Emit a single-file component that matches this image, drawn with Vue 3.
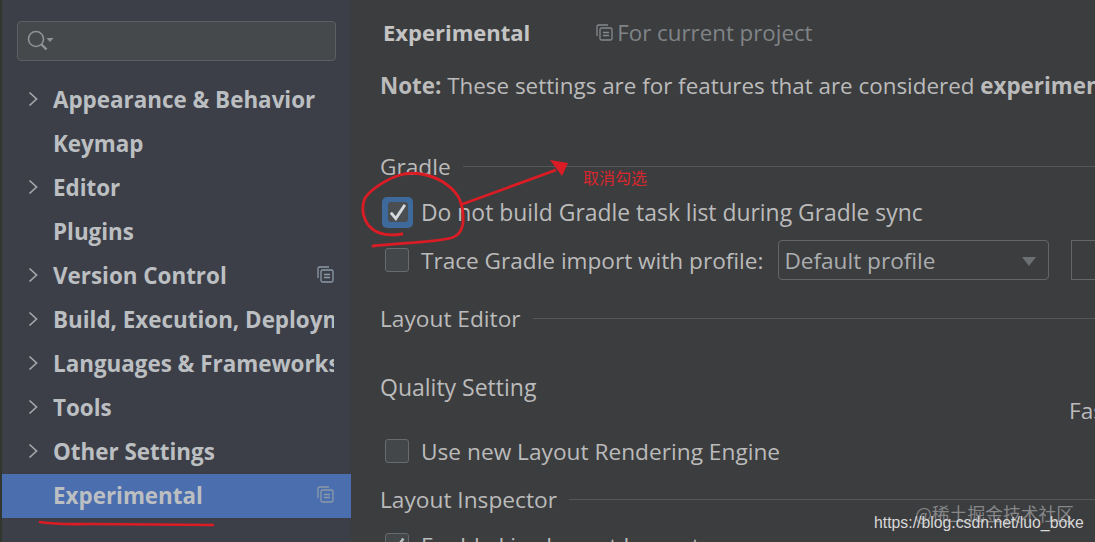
<script setup>
const treeItems = [
  { label: 'Appearance & Behavior', arrow: true },
  { label: 'Keymap' },
  { label: 'Editor', arrow: true },
  { label: 'Plugins' },
  { label: 'Version Control', arrow: true, copy: true },
  { label: 'Build, Execution, Deployment', arrow: true },
  { label: 'Languages & Frameworks', arrow: true },
  { label: 'Tools', arrow: true },
  { label: 'Other Settings', arrow: true },
  { label: 'Experimental', copy: true, selected: true }
]
</script>

<template>
  <div class="page">
    <aside class="sidebar">
      <div class="search">
        <svg class="search-icon" width="30" height="24" viewBox="0 0 30 24" fill="none">
          <circle cx="9" cy="10" r="7.500" stroke="#8f9396" stroke-width="1.600" />
          <path d="M14.500 15.500l5 5" stroke="#8f9396" stroke-width="2.400" />
          <path d="M19.500 9h7l-3.500 4z" fill="#8f9396" />
        </svg>
      </div>
      <ul class="tree">
        <li v-for="item in treeItems" :key="item.label" class="tree-row" :class="{ selected: item.selected }">
          <svg v-if="item.arrow" class="chevron" width="10" height="16" viewBox="0 0 10 16" fill="none">
            <path d="M1.500 1.500L8.500 8l-7 6.500" stroke="#a4a7aa" stroke-width="1.700" />
          </svg>
          <span class="tree-label">{{ item.label }}</span>
          <svg v-if="item.copy" class="copy" width="17" height="17" viewBox="0 0 17 17" fill="none">
            <path d="M1 12V2.500A1.500 1.500 0 0 1 2.500 1H12" stroke="#8c9aa8" stroke-width="1.300" />
            <rect x="4" y="4" width="12" height="12" rx="1.500" stroke="#8c9aa8" stroke-width="1.300" />
            <path d="M7 8.500h6M7 11.500h6" stroke="#8c9aa8" stroke-width="1.300" />
          </svg>
        </li>
      </ul>
    </aside>

    <main class="content">
      <div class="row header">
        <strong class="title">Experimental</strong>
        <span class="scope">
          <svg width="17" height="17" viewBox="0 0 17 17" fill="none">
            <path d="M1 12V2.500A1.500 1.500 0 0 1 2.500 1H12" stroke="#85898c" stroke-width="1.300" />
            <rect x="4" y="4" width="12" height="12" rx="1.500" stroke="#85898c" stroke-width="1.300" />
            <path d="M7 8.500h6M7 11.500h6" stroke="#85898c" stroke-width="1.300" />
          </svg>
          For current project
        </span>
      </div>
      <div class="row note"><b>Note:</b> These settings are for features that are considered <b>experimental</b></div>

      <div class="row group gradle"><span>Gradle</span><i class="line"></i></div>
      <div class="row check first">
        <span class="focus"><span class="box checked">
          <svg class="tick" width="26" height="26" viewBox="0 0 20 20" fill="none">
            <path d="M4.500 10.500l3.800 4.500 7-10.500" stroke="#d6d8d9" stroke-width="2.200" />
          </svg>
        </span></span>
        Do not build Gradle task list during Gradle sync
      </div>
      <div class="row check trace">
        <span class="box"></span>
        Trace Gradle import with profile:
        <span class="combo">Default profile<i class="caret"></i></span>
        <span class="field"></span>
      </div>
      <div class="row group editor"><span>Layout Editor</span><i class="line"></i></div>
      <div class="row quality">Quality Setting</div>
      <div class="row fast">Fast</div>
      <div class="row check engine"><span class="box"></span>Use new Layout Rendering Engine</div>
      <div class="row group inspector"><span>Layout Inspector</span><i class="line"></i></div>
      <div class="row check enable">
        <span class="box">
          <svg class="tick" width="24" height="24" viewBox="0 0 20 20" fill="none">
            <path d="M4.500 10.500l3.800 4.500 7-10.500" stroke="#b9bcbe" stroke-width="2.200" />
          </svg>
        </span>
        Enable Live Layout Inspector
      </div>
    </main>

    <svg class="marks" width="1095" height="542" viewBox="0 0 1095 542" fill="none">
      <path d="M373 246C395 243 430 243 451 238C462 235 464 225 463 214C462 200 457 191 443 182C430 174 415 172 404 174C390 177 372 188 365 198C361 208 363 218 369 226C377 235 390 236 402 234" stroke="#dc1c24" stroke-width="2.800" stroke-linecap="round" />
      <path d="M460 205L556 170" stroke="#dc1c24" stroke-width="2.600" />
      <path d="M550 160L568 163L562 176Z" fill="#dc1c24" />
      <path d="M40 522C60 525 70 524 90 524L213 525" stroke="#dc1c24" stroke-width="2.600" stroke-linecap="round" />
    </svg>
    <span class="annotation">取消勾选</span>
    <span class="mark-juejin">@稀土掘金技术社区</span>
    <span class="mark-csdn">https://blog.csdn.net/luo_boke</span>
  </div>
</template>

<style>
html, body { margin: 0; overflow: hidden; background: #3c3d3f; }
</style>

<style scoped>
.page {
  position: relative;
  display: flex;
  width: 1095px;
  height: 542px;
  overflow: hidden;
  background: #3c3d3f;
  color: #bbbbbb;
  font-family: "Open Sans", "Noto Sans", sans-serif;
  font-size: 22.700px;
}
.sidebar {
  flex: 0 0 351px;
  box-sizing: border-box;
  padding-top: 21px;
  border-left: 2px solid #33362f;
  background: #3c3f48;
}
.search {
  display: flex;
  align-items: center;
  box-sizing: border-box;
  width: 319px;
  height: 40px;
  margin-left: 15px;
  padding-left: 9px;
  border: 1.500px solid #5c6064;
  border-radius: 4px;
  background: #46494b;
}
.tree {
  margin: 17px 0 0;
  padding: 0;
  list-style: none;
}
.tree-row {
  position: relative;
  display: flex;
  align-items: center;
  box-sizing: border-box;
  height: 44px;
  padding: 0 0 2px 51px;
  font-size: 22.400px;
  font-weight: 700;
  color: #bcbfc2;
}
.tree-row.selected {
  background: #4b6eaf;
}
.tree-label {
  width: 281px;
  overflow: hidden;
  white-space: nowrap;
}
.chevron {
  position: absolute;
  left: 26px;
  top: 13px;
}
.copy {
  position: absolute;
  left: 315px;
  top: 12px;
}
.content {
  flex: 1;
  min-width: 0;
  padding: 13px 0 0 29px;
  white-space: nowrap;
}
.row {
  display: flex;
  align-items: center;
  height: 38px;
}
.title {
  margin-left: 3px;
  font-size: 22px;
  color: #c4c4c4;
}
.scope {
  display: flex;
  align-items: center;
  gap: 4px;
  margin-left: 66px;
  font-size: 22.300px;
  color: #808487;
}
.note {
  display: block;
  margin-top: 16px;
  font-size: 22.400px;
  line-height: 38px;
}
.group span { flex: none; }
.line {
  flex: 1;
  height: 1px;
  margin-left: 12px;
  background: #55585a;
}
.gradle { margin-top: 42px; }
.check { padding-left: 5px; }
.box {
  display: flex;
  flex: none;
  align-items: center;
  justify-content: center;
  box-sizing: border-box;
  width: 24px;
  height: 24px;
  margin-right: 12px;
  border: 1.500px solid #686b6d;
  border-radius: 3px;
  background: #43474a;
}
.tick { flex: none; }
.first {
  margin-top: 8px;
  padding-left: 2px;
  font-size: 22.900px;
}
.focus {
  display: flex;
  flex: none;
  align-items: center;
  justify-content: center;
  width: 31px;
  height: 31px;
  margin-right: 8px;
  border-radius: 5px;
  background: #3d6a9b;
}
.focus .box {
  width: 20px;
  height: 20px;
  margin: 0;
  border: none;
  background: #4a4e51;
}
.trace {
  margin-top: 10px;
  font-size: 22.600px;
}
.combo {
  position: relative;
  display: flex;
  flex: none;
  align-items: center;
  box-sizing: border-box;
  width: 271px;
  height: 40px;
  margin-left: 15px;
  padding-left: 5px;
  border: 1.500px solid #646769;
  border-radius: 4px;
  color: #abadaf;
}
.caret {
  position: absolute;
  right: 12px;
  top: 16px;
  width: 0;
  height: 0;
  border-left: 7.500px solid transparent;
  border-right: 7.500px solid transparent;
  border-top: 9px solid #6d7072;
}
.field {
  flex: none;
  box-sizing: border-box;
  width: 80px;
  height: 40px;
  margin-left: 22px;
  border: 1.500px solid #646769;
}
.editor { margin-top: 20px; }
.quality {
  margin-top: 31px;
  font-size: 23px;
}
.fast {
  margin-top: -15px;
  padding-left: 689px;
}
.engine { margin-top: 3px; }
.inspector { margin-top: 10px; }
.enable { margin-top: 8px; }
.marks {
  position: absolute;
  left: 0;
  top: 0;
  pointer-events: none;
}
.annotation {
  position: absolute;
  left: 583px;
  top: 167px;
  font-family: "Noto Sans CJK SC", sans-serif;
  font-size: 16px;
  line-height: 20px;
  color: #d9272e;
}
.mark-juejin {
  position: absolute;
  left: 915px;
  top: 500px;
  font-family: "Noto Sans CJK SC", sans-serif;
  font-size: 17.800px;
  line-height: 26px;
  color: #858789;
}
.mark-csdn {
  position: absolute;
  left: 874px;
  top: 513px;
  font-family: "Liberation Sans", sans-serif;
  font-size: 15.800px;
  line-height: 20px;
  color: #d8d8d8;
}
</style>
